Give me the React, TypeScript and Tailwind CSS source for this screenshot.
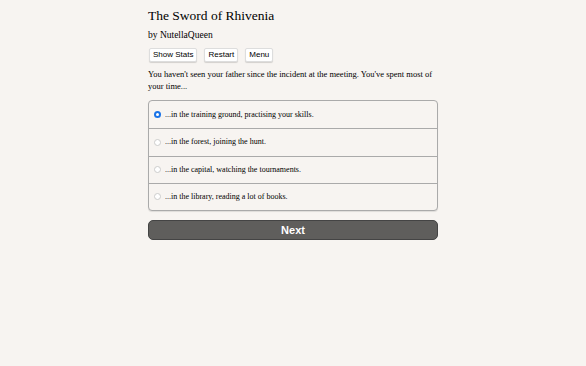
import React from "react";

const choices = [
  "...in the training ground, practising your skills.",
  "...in the forest, joining the hunt.",
  "...in the capital, watching the tournaments.",
  "...in the library, reading a lot of books.",
];

export default function App() {
  return (
    <div className="min-h-[366px] w-full bg-[#f7f4f1] text-black" style={{ fontFamily: '"Liberation Serif", serif' }}>
      <div className="mx-auto w-[290px] pt-[8px]">
        <h1 className="text-[13.5px] leading-[16px] font-normal">The Sword of Rhivenia</h1>
        <div className="mt-[5px] text-[9.5px] leading-[12px]">by NutellaQueen</div>
        <div className="mt-[7px] flex gap-[7px] pl-[1px]" style={{ fontFamily: '"Liberation Sans", sans-serif' }}>
          <button className="h-[14px] rounded-[2px] border border-[#ddd] bg-white px-[3px] text-[8px] leading-[12px] shadow-[0_1px_1px_rgba(0,0,0,0.15)]">Show Stats</button>
          <button className="h-[14px] rounded-[2px] border border-[#ddd] bg-white px-[3px] text-[8px] leading-[12px] shadow-[0_1px_1px_rgba(0,0,0,0.15)]">Restart</button>
          <button className="h-[14px] rounded-[2px] border border-[#ddd] bg-white px-[3px] text-[8px] leading-[12px] shadow-[0_1px_1px_rgba(0,0,0,0.15)]">Menu</button>
        </div>
        <p className="mt-[6px] text-[8.5px] leading-[12px]">
          You haven't seen your father since the incident at the meeting. You've spent most of your time...
        </p>
        <div className="mt-[8px] rounded-[4px] border border-[#aaa] bg-[#f7f4f1] shadow-[0_1px_1px_rgba(0,0,0,0.1)]">
          {choices.map((c, i) => (
            <label key={i} className={`flex h-[27.25px] items-center pl-[5px] text-[8px] ${i > 0 ? "border-t border-[#aaa]" : ""}`}>
              {i === 0 ? (
                <span className="mr-[4px] flex h-[7px] w-[7px] items-center justify-center rounded-full bg-[#1a73e8]">
                  <span className="h-[3px] w-[3px] rounded-full bg-white" />
                </span>
              ) : (
                <span className="mr-[4px] h-[7px] w-[7px] rounded-full border border-[#ccc] bg-white" />
              )}
              <span>{c}</span>
            </label>
          ))}
        </div>
        <button
          className="mt-[9px] flex h-[20px] w-full items-center justify-center rounded-[5px] border border-[#444] bg-[#5f5e5c] text-[11px] font-bold text-white"
          style={{ fontFamily: '"Liberation Sans", sans-serif' }}
        >
          Next
        </button>
      </div>
    </div>
  );
}
